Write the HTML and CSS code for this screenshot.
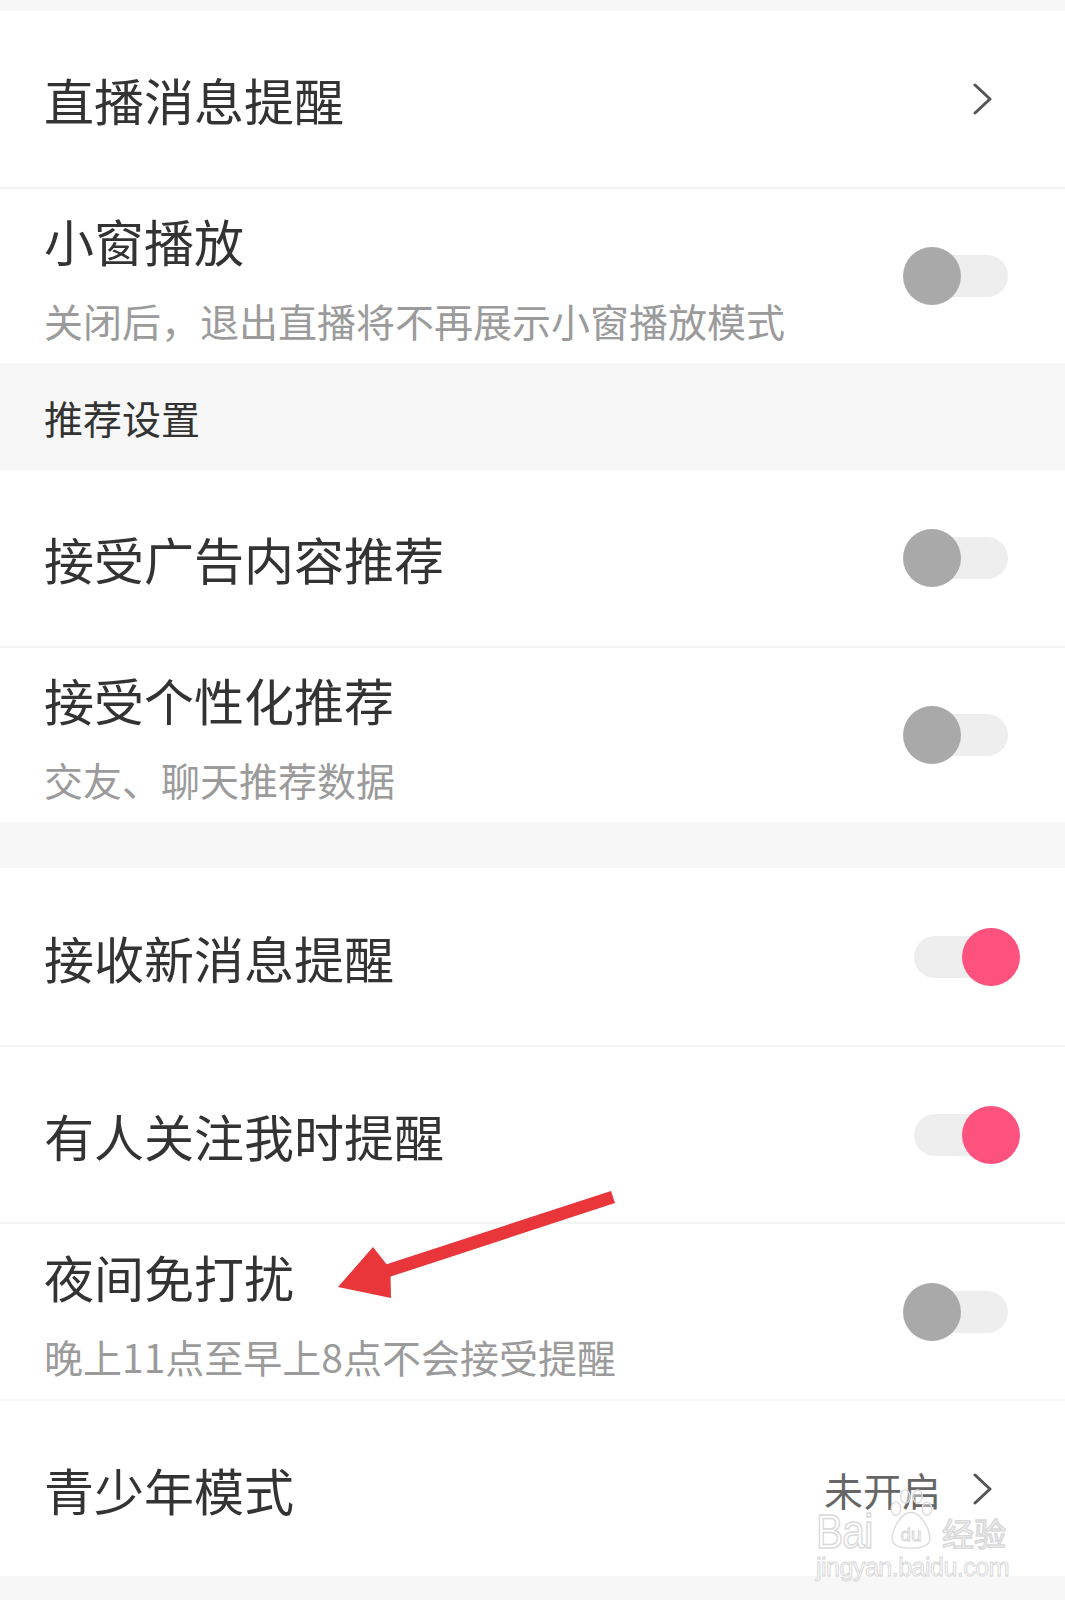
FILE: index.html
```html
<!DOCTYPE html>
<html lang="zh-CN">
<head>
    <meta charset="UTF-8">
    <meta name="viewport" content="width=device-width, initial-scale=1.0">
    <title>设置</title>
    <link rel="stylesheet" href="styles.css">
</head>
<body>
    <div class="page">
        <div class="spacer spacer-top"></div>

        <div class="group">
            <div class="row">
                <span class="title">直播消息提醒</span>
                <svg class="chevron" viewBox="0 0 20 32"><polyline points="2,2 17,16 2,30"/></svg>
            </div>
            <div class="row">
                <div class="text">
                    <div class="title">小窗播放</div>
                    <div class="desc">关闭后，退出直播将不再展示小窗播放模式</div>
                </div>
                <div class="switch"><span class="knob"></span></div>
            </div>
        </div>

        <div class="section-title">推荐设置</div>

        <div class="group">
            <div class="row">
                <span class="title">接受广告内容推荐</span>
                <div class="switch"><span class="knob"></span></div>
            </div>
            <div class="row">
                <div class="text">
                    <div class="title">接受个性化推荐</div>
                    <div class="desc">交友、聊天推荐数据</div>
                </div>
                <div class="switch"><span class="knob"></span></div>
            </div>
        </div>

        <div class="spacer spacer-mid"></div>

        <div class="group group-notify">
            <div class="row">
                <span class="title">接收新消息提醒</span>
                <div class="switch on"><span class="knob"></span></div>
            </div>
            <div class="row">
                <span class="title">有人关注我时提醒</span>
                <div class="switch on"><span class="knob"></span></div>
            </div>
            <div class="row">
                <div class="text">
                    <div class="title">夜间免打扰</div>
                    <div class="desc">晚上11点至早上8点不会接受提醒</div>
                </div>
                <div class="switch"><span class="knob"></span></div>
            </div>
            <div class="row">
                <span class="title">青少年模式</span>
                <div class="value">
                    <span>未开启</span>
                    <svg class="chevron" viewBox="0 0 20 32"><polyline points="2,2 17,16 2,30"/></svg>
                </div>
            </div>
        </div>

        <div class="spacer spacer-bottom"></div>

        <!-- annotation arrow drawn over the screenshot -->
        <svg class="arrow" viewBox="0 0 1065 1600">
            <polygon points="611,1191 386.6,1264.2 373,1247 338,1287 391,1298 390.6,1276.6 615,1203"/>
        </svg>

        <!-- watermark -->
        <div class="watermark">
            <div class="wm-top">
                <span class="wm-bai">Bai</span>
                <svg class="wm-paw" viewBox="0 0 50 66">
                    <ellipse cx="9" cy="22" rx="5" ry="7"/>
                    <ellipse cx="19" cy="9" rx="5" ry="7"/>
                    <ellipse cx="32" cy="9" rx="5" ry="7"/>
                    <ellipse cx="42" cy="22" rx="5" ry="7"/>
                    <path d="M25 26 C14 26 5 44 5 54 C5 62 14 64 25 64 C36 64 45 62 45 54 C45 44 36 26 25 26 Z"/>
                    <text x="25" y="56" text-anchor="middle">du</text>
                </svg>
                <span class="wm-cn">经验</span>
            </div>
            <div class="wm-url">jingyan.baidu.com</div>
        </div>
    </div>
</body>
</html>
```

FILE: styles.css
```css
body {
    margin: 0;
    padding: 0;
    background-color: #f7f7f7;
    font-family: "Noto Sans CJK SC", "Noto Sans", sans-serif;
    color: #333;
}

.page {
    position: relative;
    width: 1065px;
    min-height: 1600px;
    background-color: #f7f7f7;
}

.spacer-top {
    height: 11px;
}

.spacer-mid {
    height: 46px;
}

.spacer-bottom {
    height: 24px;
}

.group {
    background: #fff;
}

.row {
    display: flex;
    align-items: center;
    justify-content: space-between;
    box-sizing: border-box;
    height: 176px;
    padding: 0 45px 0 44px;
    border-top: 2px solid #f4f4f4;
}

.row:first-child {
    border-top: none;
}

.group-notify .row {
    height: 177px;
}

.title {
    font-size: 50px;
    line-height: 60px;
    color: #333;
}

.text {
    padding-top: 3px;
}

.desc {
    margin-top: 25px;
    font-size: 39px;
    line-height: 50px;
    color: #9b9b9b;
}

.section-title {
    display: flex;
    align-items: center;
    box-sizing: border-box;
    height: 107px;
    padding: 0 0 0 44px;
    font-size: 39px;
    color: #333;
}

.chevron {
    width: 20px;
    height: 32px;
    margin-right: 27px;
    fill: none;
    stroke: #555;
    stroke-width: 3;
    stroke-linecap: round;
    stroke-linejoin: round;
}

.value {
    display: flex;
    align-items: center;
    gap: 32px;
    font-size: 39px;
    color: #666;
}

/* toggle switch */
.switch {
    display: flex;
    align-items: center;
    justify-content: flex-start;
    width: 94px;
    height: 42px;
    margin: 0 12px 0 11px;
    border-radius: 21px;
    background-color: #eeeeee;
}

.switch .knob {
    flex: none;
    width: 58px;
    height: 58px;
    margin-left: -11px;
    border-radius: 50%;
    background-color: #a9a9a9;
}

.switch.on {
    justify-content: flex-end;
}

.switch.on .knob {
    margin-left: 0;
    margin-right: -12px;
    background-color: #fe527e;
}

.arrow {
    position: absolute;
    left: 0;
    top: 0;
    width: 1065px;
    height: 1600px;
    pointer-events: none;
}

.arrow polygon {
    fill: #e8363b;
}

.watermark {
    position: absolute;
    left: 816px;
    top: 1488px;
    pointer-events: none;
    font-family: "Liberation Sans", Arial, sans-serif;
}

.wm-top {
    display: flex;
    align-items: flex-end;
    height: 62px;
}

.wm-bai,
.wm-cn,
.wm-url {
    color: rgba(255, 255, 255, 0.4);
    -webkit-text-stroke: 1.5px #d9d9d9;
}

.wm-bai {
    font-size: 48px;
    line-height: 36px;
    letter-spacing: -1px;
    transform: scaleX(0.85);
    transform-origin: left bottom;
    width: 68px;
}

.wm-paw {
    width: 50px;
    height: 62px;
    margin-left: 2px;
}

.wm-paw ellipse,
.wm-paw path {
    fill: rgba(255, 255, 255, 0.4);
    stroke: #dcdcdc;
    stroke-width: 1.5;
}

.wm-paw text {
    font-family: "Liberation Sans", Arial, sans-serif;
    font-size: 20px;
    fill: rgba(255, 255, 255, 0.4);
    stroke: #d6d6d6;
    stroke-width: 1;
}

.wm-cn {
    font-family: "Noto Sans CJK SC", sans-serif;
    font-size: 32px;
    line-height: 36px;
    margin-left: 6px;
}

.wm-url {
    margin-top: 4px;
    font-size: 25px;
    line-height: 26px;
    letter-spacing: -0.5px;
    -webkit-text-stroke: 1px #d9d9d9;
}
```
